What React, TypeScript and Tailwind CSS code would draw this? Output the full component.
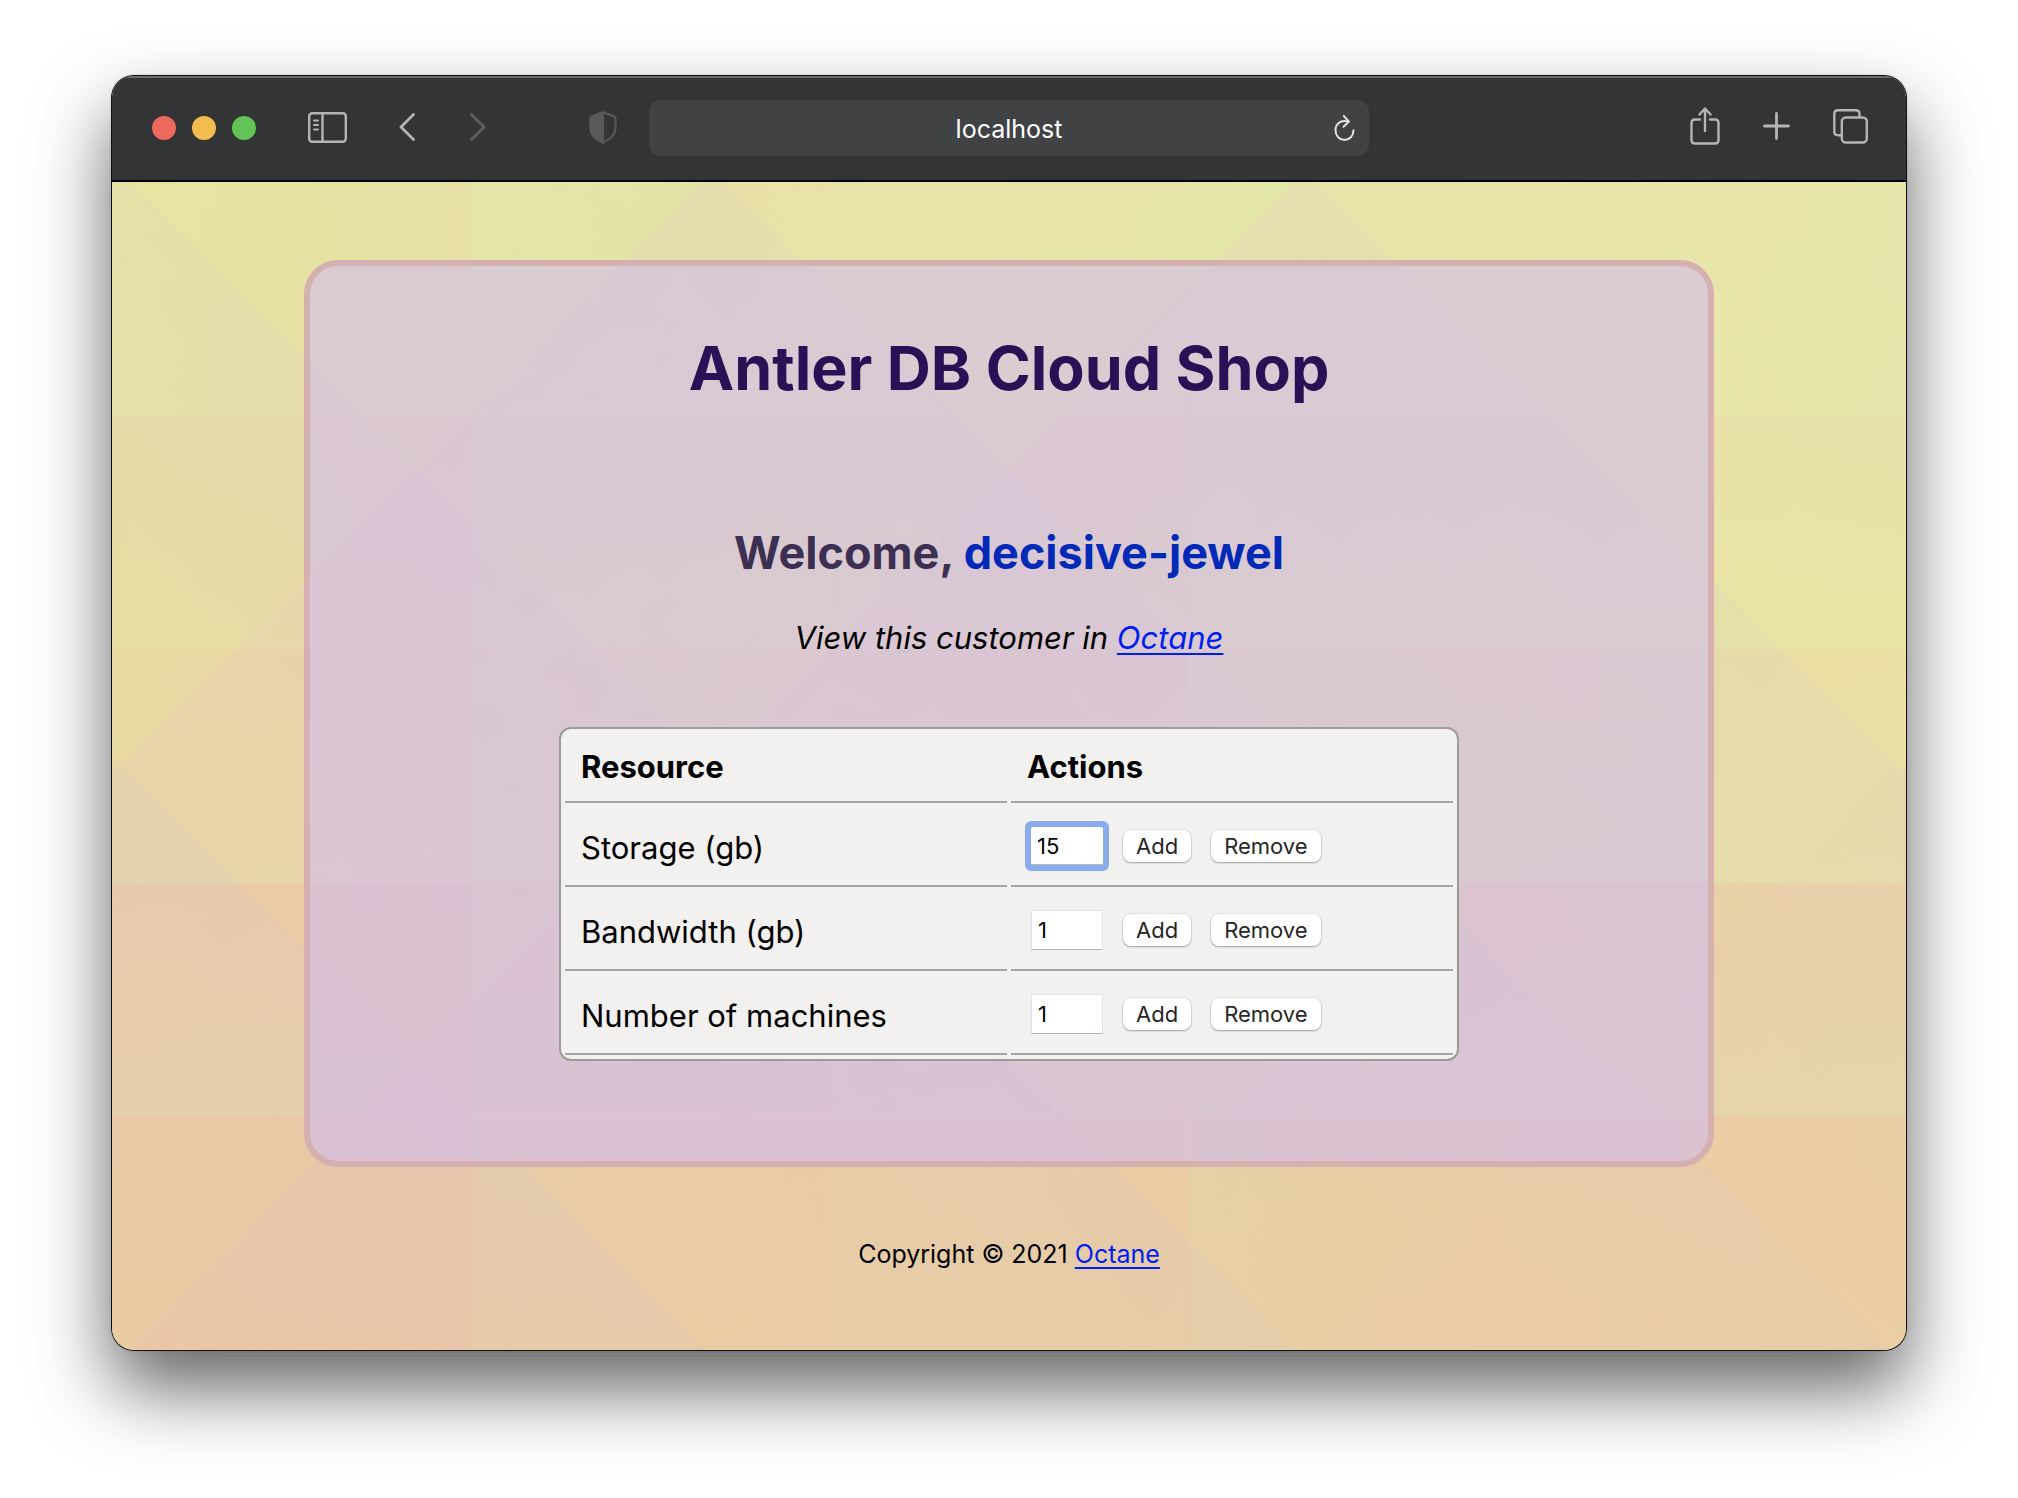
import React from "react";

const rows = [
  { id: "storage", label: "Storage (gb)", value: "15", active: true },
  { id: "bandwidth", label: "Bandwidth (gb)", value: "1", active: false },
  { id: "machines", label: "Number of machines", value: "1", active: false },
];

// Overlapping translucent stripes in four directions give the faceted backdrop.
const backdrop = [
  "repeating-linear-gradient(45deg, rgba(200,190,215,0) 0%, rgba(200,190,215,.12) 20%)",
  "linear-gradient(-45deg, rgba(235,175,215,0) 0% 6%, rgba(235,175,215,.05) 20%, rgba(235,175,215,0) 20%, rgba(235,175,215,.04) 40%, rgba(245,165,215,.03) 40%, rgba(245,165,215,.12) 60%, rgba(245,165,215,0) 60%, rgba(245,165,215,.11) 80%, rgba(245,165,215,0) 80%)",
  "linear-gradient(90deg, rgba(250,165,160,.02) 0%, rgba(250,165,160,.07) 20%, rgba(190,245,170,.08) 20%, rgba(190,245,170,0) 40%, rgba(210,235,185,.05) 40%, rgba(210,235,185,0) 60%, rgba(200,250,180,.08) 60%, rgba(200,250,180,0) 78%)",
  "linear-gradient(90deg, rgba(220,185,155,.14), rgba(220,185,155,0))",
  "linear-gradient(180deg, #eaeda3 0%, #e9eaa7 20%, #e9e4a5 20%, #e9e6a3 40%, #ebe0a2 40%, #e9e0a7 60%, #ebd3a4 60%, #e8d6a8 80%, #ebcfa2 80%, #ebcea2 100%)",
].join(", ");

function Toolbar() {
  return (
    <header className="grid h-[106px] grid-cols-[1fr_720px_1fr] items-center border-b-2 border-black bg-[#333436] shadow-[inset_0_2px_0_#6b6d6d]">
      <div className="flex items-center pl-10">
        <div className="flex gap-4">
          <button aria-label="Close" className="size-6 rounded-full bg-[#ed6a5f]" />
          <button aria-label="Minimize" className="size-6 rounded-full bg-[#f5bd4f]" />
          <button aria-label="Zoom" className="size-6 rounded-full bg-[#61c454]" />
        </div>
        <button aria-label="Show sidebar" className="ml-[52px] pb-0.5 text-[#b4b5b6]">
          <svg width="39" height="31" viewBox="0 0 39 31" fill="none" stroke="currentColor" strokeWidth="2.4" strokeLinecap="round">
            <rect x="1.2" y="1.2" width="36.6" height="28.6" rx="3" />
            <path d="M14.5 1.5v28" />
            <path d="M6 8.5h4M6 13h4M6 17.5h4" strokeWidth="2" />
          </svg>
        </button>
        <button aria-label="Back" className="ml-[52px] pb-0.5 text-[#b4b5b6]">
          <svg width="16" height="30" viewBox="0 0 16 30" fill="none" stroke="currentColor" strokeWidth="2.8" strokeLinecap="round" strokeLinejoin="round">
            <path d="M14.5 2.5L2 15l12.500 12.500" />
          </svg>
        </button>
        <button aria-label="Forward" className="ml-[55px] pb-0.5 text-[#5d5e60]">
          <svg width="16" height="30" viewBox="0 0 16 30" fill="none" stroke="currentColor" strokeWidth="2.8" strokeLinecap="round" strokeLinejoin="round">
            <path d="M1.500 2.500L14 15L1.500 27.500" />
          </svg>
        </button>
        <button aria-label="Privacy report" className="mr-8 ml-auto pb-0.5 text-[#58595b]">
          <svg width="28" height="33" viewBox="0 0 28 33" fill="none" stroke="currentColor" strokeWidth="2.200" strokeLinejoin="round">
            <path d="M14 1.300L24.600 5.200Q26.500 6 26.500 8V17C26.500 24 21 28.500 14 31.700C7 28.500 1.500 24 1.500 17V8Q1.500 6 3.400 5.200Z" />
            <path d="M14 1.300V31.700C7 28.500 1.500 24 1.500 17V8Q1.500 6 3.400 5.200Z" fill="currentColor" />
          </svg>
        </button>
      </div>
      <div className="grid h-14 grid-cols-[1fr_auto_1fr] items-center rounded-xl bg-[#414244] px-3">
        <span className="col-start-2 pt-0.5 text-[25px] leading-8 text-white">localhost</span>
        <button aria-label="Reload" className="justify-self-end text-[#e2e2e3]">
          <svg width="24" height="30" viewBox="0 0 24 30" fill="none" stroke="currentColor" strokeWidth="2" strokeLinecap="round" strokeLinejoin="round">
            <path d="M15.500 8.600C6.500 6 2.500 12 2.500 17.300C2.500 23 6.500 27 11.500 27S20.500 23 20.500 17.300" />
            <path d="M10.800 3L16 8.600L10.500 13.700" />
          </svg>
        </button>
      </div>
      <div className="flex items-center justify-end gap-[43px] pr-[38px] pb-1 text-[#b4b5b6]">
        <button aria-label="Share">
          <svg width="30" height="40" viewBox="0 0 30 40" fill="none" stroke="currentColor" strokeWidth="2.400" strokeLinecap="round" strokeLinejoin="round">
            <path d="M10 13.500H5Q1.500 13.500 1.500 17V34Q1.500 37.500 5 37.500H25Q28.500 37.500 28.500 34V17Q28.500 13.500 25 13.500H20" />
            <path d="M15 25V3M9.500 8.500L15 2.500L20.500 8.500" />
          </svg>
        </button>
        <button aria-label="New tab">
          <svg width="27" height="28" viewBox="0 0 27 28" fill="none" stroke="currentColor" strokeWidth="2.800" strokeLinecap="round">
            <path d="M13.500 1.500V26.500M1.500 14H25.500" />
          </svg>
        </button>
        <button aria-label="Show all tabs">
          <svg width="35" height="35" viewBox="0 0 35 35" fill="none" stroke="currentColor" strokeWidth="2.400" strokeLinejoin="round">
            <rect x="8.800" y="8.500" width="25" height="25" rx="4" />
            <path d="M26.500 8.500V5Q26.500 1.300 22.800 1.300H5Q1.300 1.300 1.300 5V22.500Q1.300 26.200 5 26.200H8.500" />
          </svg>
        </button>
      </div>
    </header>
  );
}

function ActionButton({ children }: { children: React.ReactNode }) {
  return (
    <button
      type="button"
      className="h-8 rounded-lg bg-white px-[13px] text-[22px] leading-8 text-[#262626] shadow-[0_0_1px_1px_rgba(0,0,0,.06),0_1px_2px_rgba(0,0,0,.3)]"
    >
      {children}
    </button>
  );
}

function ResourceTable() {
  return (
    <table className="w-[900px] max-w-full table-fixed border-separate border-spacing-1 rounded-xl border-2 border-[#9b9b9b] bg-[#f2f1ef] text-left text-[31px] text-black">
      <thead>
        <tr>
          <th className="h-[70px] border-b-2 border-[#a5a5a5] px-4 leading-10 font-bold">Resource</th>
          <th className="h-[70px] border-b-2 border-[#a5a5a5] px-4 leading-10 font-bold">Actions</th>
        </tr>
      </thead>
      <tbody>
        {rows.map((row) => (
          <tr key={row.id}>
            <td className="h-20 border-b-2 border-[#a5a5a5] px-4 pt-1 leading-10">
              <label htmlFor={row.id}>{row.label}</label>
            </td>
            <td className="h-20 border-b-2 border-[#a5a5a5] px-5">
              <div className="flex items-center gap-5">
                <input
                  id={row.id}
                  defaultValue={row.value}
                  className={
                    row.active
                      ? "h-[38px] w-[72px] rounded-xs border-b border-[#b5b5b5] bg-white px-1.5 text-[22px] outline-none ring-6 ring-[#8aabec]"
                      : "h-10 w-[72px] rounded-none border border-[#e2e2e2] border-b-[#b5b5b5] bg-white px-1.5 text-[22px] outline-none"
                  }
                />
                <ActionButton>Add</ActionButton>
                <ActionButton>Remove</ActionButton>
              </div>
            </td>
          </tr>
        ))}
      </tbody>
    </table>
  );
}

export default function App() {
  return (
    <div className="flex min-h-screen flex-col bg-white px-[112px] pt-[76px] pb-[148px] font-['Inter',sans-serif]">
      <div className="flex flex-1 flex-col overflow-hidden rounded-[22px] shadow-[0_0_0_1px_#111,0_0_3px_rgba(0,0,0,.3),0_38px_76px_rgba(0,0,0,.62)]">
        <Toolbar />
        <div className="flex flex-1 flex-col" style={{ backgroundImage: backdrop }}>
          <main className="mx-48 mt-[78px] flex flex-col items-center rounded-[34px] border-6 border-[#d4b0b0] bg-[rgba(208,186,240,.58)] pt-[62px] pb-[100px]">
            <h1 className="text-[61px] leading-[80px] font-bold text-[#2b1055]">Antler DB Cloud Shop</h1>
            <h2 className="mt-[115px] text-[45px] leading-[60px] font-bold text-[#3c3052]">
              Welcome, <span className="text-[#0029b8]">decisive-jewel</span>
            </h2>
            <p className="mt-[35px] mb-[69px] text-[31px] leading-10 text-black italic">
              View this customer in{" "}
              <a href="#octane" className="text-[#001ef0] underline decoration-2 underline-offset-4">
                Octane
              </a>
            </p>
            <ResourceTable />
          </main>
          <footer className="mt-[67px] pb-[60px] text-center text-[25px] leading-10 text-black">
            Copyright © 2021{" "}
            <a href="#octane" className="text-[#001ef0] underline decoration-2 underline-offset-4">
              Octane
            </a>
          </footer>
        </div>
      </div>
    </div>
  );
}
